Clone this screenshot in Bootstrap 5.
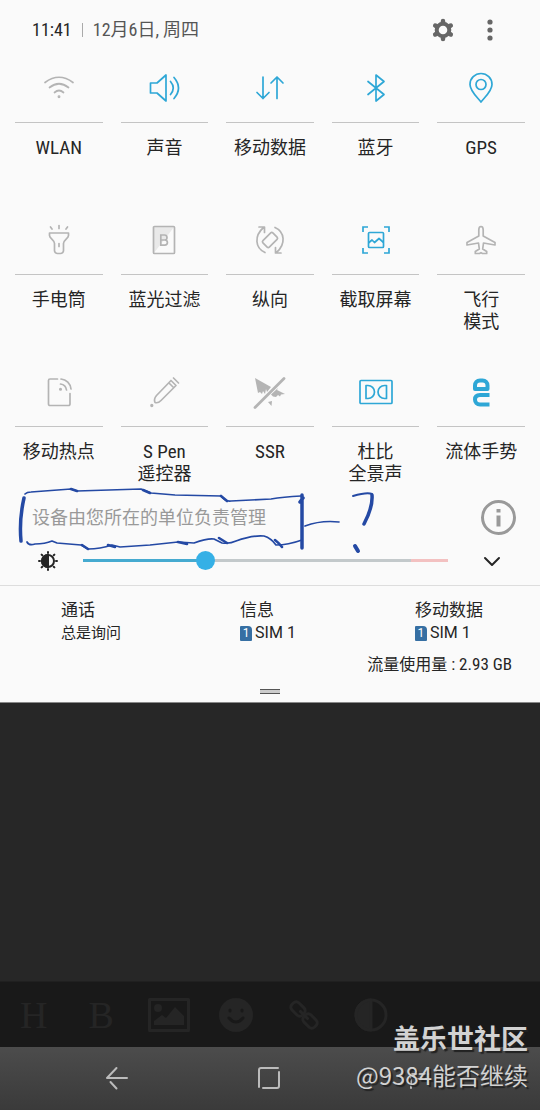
<!DOCTYPE html>
<html lang="zh-CN">
<head>
<meta charset="utf-8">
<meta name="viewport" content="width=device-width, initial-scale=1">
<title>快捷设置</title>
<link href="https://cdn.jsdelivr.net/npm/bootstrap@5.3.0/dist/css/bootstrap.min.css" rel="stylesheet">
<style>
body{background:#272727;color:#252525;font-family:"Roboto Condensed","Liberation Sans Narrow",Roboto,"Noto Sans CJK SC",sans-serif;font-size:18px;line-height:22px}
button{background:none;border:0;padding:0;color:inherit;font:inherit}
svg{display:block;fill:none;stroke:currentColor;stroke-width:2;stroke-linecap:round;stroke-linejoin:round;overflow:visible}
.panel{background:#fafafa;border-bottom:1px solid #888}
.status{height:54px;padding:6px 47px 0 32px}
.status button{color:#666}
.more{margin-left:32px}
.more svg{fill:currentColor;stroke:none}
.sep{width:1px;height:14px;background:#aaa;margin:0 10px}
.date{color:#555}
.tiles{padding:0 6px}
.tile-col{padding:0 9px 25px}
.last .tile-col{padding-bottom:0}
.tile-icon{height:69px;border-bottom:1px solid #c4c4c4;color:#b4b4b4}
.tile-icon svg{stroke-width:1.7}
.on .tile-icon{color:#2ea7d6}
.tile-label{margin:14px -9px 0;min-height:44px}
.latin{font-size:19px}
.notice{height:63px;padding:2px 24px 0 32px;color:#999}
.notice button svg{stroke:#999}
.scribble{left:0;top:0;color:#2449a4;pointer-events:none;z-index:2}
.bright{height:37px;padding:0 38px 12px}
.bright input{appearance:none;-webkit-appearance:none;background:none;height:20px;margin:0 34px 0 25px;min-width:0}
.bright input::-webkit-slider-runnable-track{height:3px;background:linear-gradient(90deg,#45aad0 33%,#c3c9cb 33% 90%,#f3c1c1 90%)}
.bright input::-webkit-slider-thumb{-webkit-appearance:none;width:19px;height:19px;border-radius:50%;background:#35b0e6;margin-top:-8px}
.sims{border-top:1px solid #ddd;padding:13px 57px 0 61px;font-size:17px}
.sub{font-family:Roboto,"Noto Sans CJK SC",sans-serif;font-size:15px;line-height:24px}
.sim{font-size:16px;gap:3px}
.simchip{width:12px;height:15px;border-radius:1px 4px 1px 1px;background:#366fa3;color:#fff;font-size:12px;line-height:15px}
.usage{font-size:16px;padding:8px 28px 0}
.usage span{font-size:17px}
.grip{width:20px;height:5px;background:#ccc;border:solid #555;border-width:1px 0;margin:13px 0 8px}
.editor{background:#191919;height:66px;color:#252525;border-top:1px solid #202020}
.editor button{flex:0 0 12.5%;font:38px/66px "Liberation Serif",serif}
.editor svg{stroke-width:3}
.solid{fill:currentColor}
.sysnav{background:linear-gradient(#4c4c4c,#3a3a3a);height:63px;padding:0 43px 2px 41px;color:#bbb}
.sysnav button{flex:1}
.watermark{right:12px;bottom:17px;color:#d2d2d2;text-shadow:2px 2px 1px #222;font:24px/36px "Noto Sans CJK SC",sans-serif}
.watermark strong{font-size:27px}
</style>
</head>
<body>
<div class="d-flex flex-column min-vh-100 position-relative">
<section class="panel">
  <header class="status d-flex align-items-center">
    <span>11:41</span><span class="sep"></span><span class="date">12月6日, 周四</span>
    <button class="ms-auto" aria-label="设置"><svg width="24" height="24"><circle cx="12" cy="12" r="6.300" stroke-width="4"/><g stroke-width="4.500"><path id="teeth" d="M12 3v1M12 20v1"/><path d="M12 3v1M12 20v1" transform="rotate(60 12 12)"/><path d="M12 3v1M12 20v1" transform="rotate(120 12 12)"/></g></svg></button>
    <button class="more" aria-label="更多"><svg width="6" height="22"><circle cx="3" cy="3" r="2.600"/><circle cx="3" cy="11" r="2.600"/><circle cx="3" cy="19" r="2.600"/></svg></button>
  </header>
  <div class="tiles">
    <div class="row row-cols-5 g-0">
      <div class="col tile-col"><button class="w-100 d-block"><span class="tile-icon d-flex align-items-center justify-content-center"><svg width="32" height="32"><path d="M2 10.500Q16 0 30 10.500M6.500 15.500Q16 8 25.500 15.500M11.500 20.500Q16 16.500 20.500 20.500"/><circle class="solid" cx="16" cy="24.800" r=".6"/></svg></span><span class="tile-label d-block latin">WLAN</span></button></div>
      <div class="col tile-col"><button class="w-100 d-block on"><span class="tile-icon d-flex align-items-center justify-content-center"><svg width="32" height="32"><path d="M2.500 11H9L18 3v26L9 21H2.500zM22.500 9.500q5.500 6.500 0 13M26 5.500q9 10.500 0 21"/></svg></span><span class="tile-label d-block">声音</span></button></div>
      <div class="col tile-col"><button class="w-100 d-block on"><span class="tile-icon d-flex align-items-center justify-content-center"><svg width="32" height="32"><path d="M9 5v21.500M3 20.500l6 6 6-6M23 26.500V5M17 11l6-6 6 6"/></svg></span><span class="tile-label d-block">移动数据</span></button></div>
      <div class="col tile-col"><button class="w-100 d-block on"><span class="tile-icon d-flex align-items-center justify-content-center"><svg width="32" height="32"><path d="M8 9.500 24 22.500 16 29V3l8 6.500L8 22.500"/></svg></span><span class="tile-label d-block">蓝牙</span></button></div>
      <div class="col tile-col"><button class="w-100 d-block on"><span class="tile-icon d-flex align-items-center justify-content-center"><svg width="32" height="32"><path d="M16 30C12 25 5 19 5 12.500a11 11 0 0 1 22 0C27 19 20 25 16 30z"/><circle cx="16" cy="12.500" r="5"/></svg></span><span class="tile-label d-block latin">GPS</span></button></div>
    </div>
    <div class="row row-cols-5 g-0">
      <div class="col tile-col"><button class="w-100 d-block"><span class="tile-icon d-flex align-items-center justify-content-center"><svg width="32" height="32"><path d="M6.500 9h19v2.500c0 3-5 4.500-5 8v7a3 3 0 0 1-3 3h-3a3 3 0 0 1-3-3v-7c0-3.500-5-5-5-8zM16 1.500v3M7.500 3l1.500 2M24.500 3 23 5M16 19.500v3"/></svg></span><span class="tile-label d-block">手电筒</span></button></div>
      <div class="col tile-col"><button class="w-100 d-block"><span class="tile-icon d-flex align-items-center justify-content-center"><svg width="32" height="32"><path d="M5.500 2.500h21l-21 27z" fill="#e9e9e9" stroke="none"/><rect x="5.500" y="2.500" width="21" height="27" rx="1"/><path stroke-linejoin="miter" d="M12.800 11h3.700a2.500 2.500 0 0 1 0 5h-3.700zM12.800 16h4a2.600 2.600 0 0 1 0 5.200h-4z"/></svg></span><span class="tile-label d-block">蓝光过滤</span></button></div>
      <div class="col tile-col"><button class="w-100 d-block"><span class="tile-icon d-flex align-items-center justify-content-center"><svg width="32" height="32"><path d="M11 28.500C1 24 0 12 9.500 3.500M5 3h5.500v5.500M21 3.500C31 8 32 20 22.500 28.500M27 29h-5.500v-5.500"/><rect x="9" y="11.500" width="14" height="9" rx="1.500" transform="rotate(-45 16 16)"/></svg></span><span class="tile-label d-block">纵向</span></button></div>
      <div class="col tile-col"><button class="w-100 d-block on"><span class="tile-icon d-flex align-items-center justify-content-center"><svg width="32" height="32"><path stroke-linecap="butt" stroke-linejoin="miter" d="M3 8V3h5M24 3h5v5M29 24v5h-5M8 29H3v-5"/><rect x="8.500" y="8.500" width="15" height="15" rx="1"/><path d="m9 18.500 3-2.500 2.500 2.500 4.500-4 4 3.500"/></svg></span><span class="tile-label d-block">截取屏幕</span></button></div>
      <div class="col tile-col"><button class="w-100 d-block"><span class="tile-icon d-flex align-items-center justify-content-center"><svg width="32" height="32"><path d="M16 2.500c1.500 0 2.200 1.500 2.200 3.500v6L30 18.500V21l-11.500-2-.8 6 4 2.500v2h-4.200L16 28.700l-1.500.8h-4.200v-2l4-2.500-.8-6L2 21v-2.500L13.800 12V6c0-2 .7-3.500 2.200-3.500z"/></svg></span><span class="tile-label d-block">飞行<br>模式</span></button></div>
    </div>
    <div class="row row-cols-5 g-0 last">
      <div class="col tile-col"><button class="w-100 d-block"><span class="tile-icon d-flex align-items-center justify-content-center"><svg width="32" height="32"><path d="M14.500 3H7a1.500 1.500 0 0 0-1.500 1.500V28A1.500 1.500 0 0 0 7 29.500h18.500A1.500 1.500 0 0 0 27 28V17.500M18 3a11 11 0 0 1 10 10M17.500 8a7 7 0 0 1 6 6"/><circle class="solid" cx="17.500" cy="13.200" r=".7"/></svg></span><span class="tile-label d-block">移动热点</span></button></div>
      <div class="col tile-col"><button class="w-100 d-block"><span class="tile-icon d-flex align-items-center justify-content-center"><svg width="32" height="32"><path d="M7 26.500q-1.500-3.500 1.500-7L23 4.500 28 9.500l-15 15q-3 3-6 2zM21 7l4.500 4.500M25.500 2l5 5"/><circle class="solid" cx="3.800" cy="29.500" r=".8"/></svg></span><span class="tile-label d-block"><span class="latin">S Pen</span><br>遥控器</span></button></div>
      <div class="col tile-col"><button class="w-100 d-block"><span class="tile-icon d-flex align-items-center justify-content-center"><svg width="32" height="32"><path class="solid" stroke="none" d="m1 2 16 9-4 5-1-3-1 5-2-3-1 3-2-2-2 1zM24 12l-1 2 8 4-4 .5-1 2-2-1.500-2 2-3-.5-2-2zM14 26l4-1-.5 5z"/><path d="M1 31.500 30 2.500" stroke-width="2.800"/></svg></span><span class="tile-label d-block latin">SSR</span></button></div>
      <div class="col tile-col"><button class="w-100 d-block on"><span class="tile-icon d-flex align-items-center justify-content-center"><svg width="32" height="32"><rect y="4.500" width="32" height="23" rx="1"/><path d="M6 9.500h2a6.500 6.500 0 0 1 0 13H6zM26.500 9.500h-2a6.500 6.500 0 0 0 0 13h2z"/></svg></span><span class="tile-label d-block">杜比<br>全景声</span></button></div>
      <div class="col tile-col"><button class="w-100 d-block on"><span class="tile-icon d-flex align-items-center justify-content-center"><svg width="32" height="32"><path stroke-width="4" stroke-linecap="butt" d="M10 13h12.500V9.500c0-3-2-5-5-5H15c-3 0-5 2-5 5zM24.500 19H15c-3 0-5 1.500-5 4.500s2 5 5 5h9.500"/></svg></span><span class="tile-label d-block">流体手势</span></button></div>
    </div>
  </div>
  <div class="notice position-relative d-flex align-items-center justify-content-between">
    <span>设备由您所在的单位负责管理</span>
    <button aria-label="信息"><svg width="35" height="35"><circle cx="17.500" cy="17.500" r="16" stroke-width="3"/><path stroke-linecap="butt" stroke-width="4" d="M17.500 9v3.500M17.500 15.500v11"/></svg></button>
    <svg class="scribble position-absolute" width="380" height="70"><path stroke-width="1.700" d="M25 9q2-2 6-2l40-3 6 2 64-2 10 4 24 2 46 1q5 6 10 5l40-2q12-2 30-3M27 57q2 4 8 2 10 0 17-3l5 2 24 2 7 4q12 0 24-4l8 2 30-2 28-3 16 1q14-5 20-4l8 4q8 1 14-2 16-6 28-5 7 2 12 9 12 0 26-5M305 41q16-6 34-4"/><path stroke-width="2.600" d="m71 4 6 2M143 5l7 3M221 11l6 5M82 60l6 4M108 60l7 2M178 57l9 2M219 53l8 5M275 55q4 3 7 7"/><path stroke-width="3.500" d="M24 13q-5 22-3 43M302 10v53M300 17l3-4M372 10q1 12-8 29"/><path d="M353 11q14-4 19-2"/><path stroke-width="4" d="m355 61 3 5"/></svg>
  </div>
  <div class="bright d-flex align-items-center">
    <svg width="20" height="20" aria-hidden="true"><circle cx="10" cy="10" r="6"/><path class="solid" d="M10 4v12a6 6 0 0 1 0-12z"/><path d="M10 1v1M10 18v1M1 10h1M18 10h1M3.600 3.600l.7.7M15.700 15.700l.7.7M3.600 16.400l.7-.7M15.700 4.300l.7-.7"/></svg>
    <input class="flex-grow-1" type="range" min="0" max="255" value="83" aria-label="亮度">
    <button aria-label="展开"><svg width="20" height="20"><path d="m3 7 7 7 7-7"/></svg></button>
  </div>
  <div class="sims d-flex justify-content-between">
    <div>通话<div class="sub">总是询问</div></div>
    <div>信息<div class="sub sim d-flex align-items-center"><span class="simchip text-center">1</span>SIM 1</div></div>
    <div>移动数据<div class="sub sim d-flex align-items-center"><span class="simchip text-center">1</span>SIM 1</div></div>
  </div>
  <div class="usage text-end">流量使用量<span> : 2.93 GB</span></div>
  <div class="d-flex justify-content-center"><div class="grip"></div></div>
</section>
<main class="flex-grow-1"></main>
<div class="editor d-flex align-items-center">
  <button>H</button><button>B</button>
  <button aria-label="图片"><svg class="mx-auto" width="42" height="34"><rect x="1.500" y="1.500" width="39" height="31"/><path class="solid" stroke="none" d="M6 27v-4l8-6 4 3 9-11 9 9v9z"/><circle class="solid" stroke="none" cx="10" cy="10" r="4"/></svg></button>
  <button aria-label="表情"><svg class="mx-auto" width="36" height="36"><circle class="solid" stroke="none" cx="18" cy="18" r="17"/><path stroke="#191919" d="M12 13v1M24 13v1M11 21q7 8 14 0"/></svg></button>
  <button aria-label="链接"><svg class="mx-auto" width="30" height="30"><g transform="rotate(45 15 15)"><rect x="-1" y="10" width="15" height="10" rx="4"/><rect x="16" y="10" width="15" height="10" rx="4"/><path d="M10 15h10"/></g></svg></button>
  <button aria-label="对比度"><svg class="mx-auto" width="34" height="34"><circle cx="17" cy="17" r="15"/><path class="solid" d="M17 2v30a15 15 0 0 1 0-30z"/></svg></button>
</div>
<nav class="sysnav d-flex align-items-center">
  <button aria-label="返回"><svg class="mx-auto" width="22" height="22"><path d="M21 11H1L10.500 1M4.500 15l6 6.500"/></svg></button>
  <button aria-label="主屏幕"><svg class="mx-auto" width="22" height="22"><path d="M1 20V3q0-2 2-2h17M21 5v14q0 2-2 2H5"/></svg></button>
  <button aria-label="最近任务"><svg class="mx-auto" width="22" height="22"><path d="M1 21V7h18M6 12h12"/></svg></button>
</nav>
<div class="watermark position-absolute text-end"><strong>盖乐世社区</strong><br>@9384能否继续</div>
</div>
<script src="https://cdn.jsdelivr.net/npm/bootstrap@5.3.0/dist/js/bootstrap.bundle.min.js"></script>
</body>
</html>
